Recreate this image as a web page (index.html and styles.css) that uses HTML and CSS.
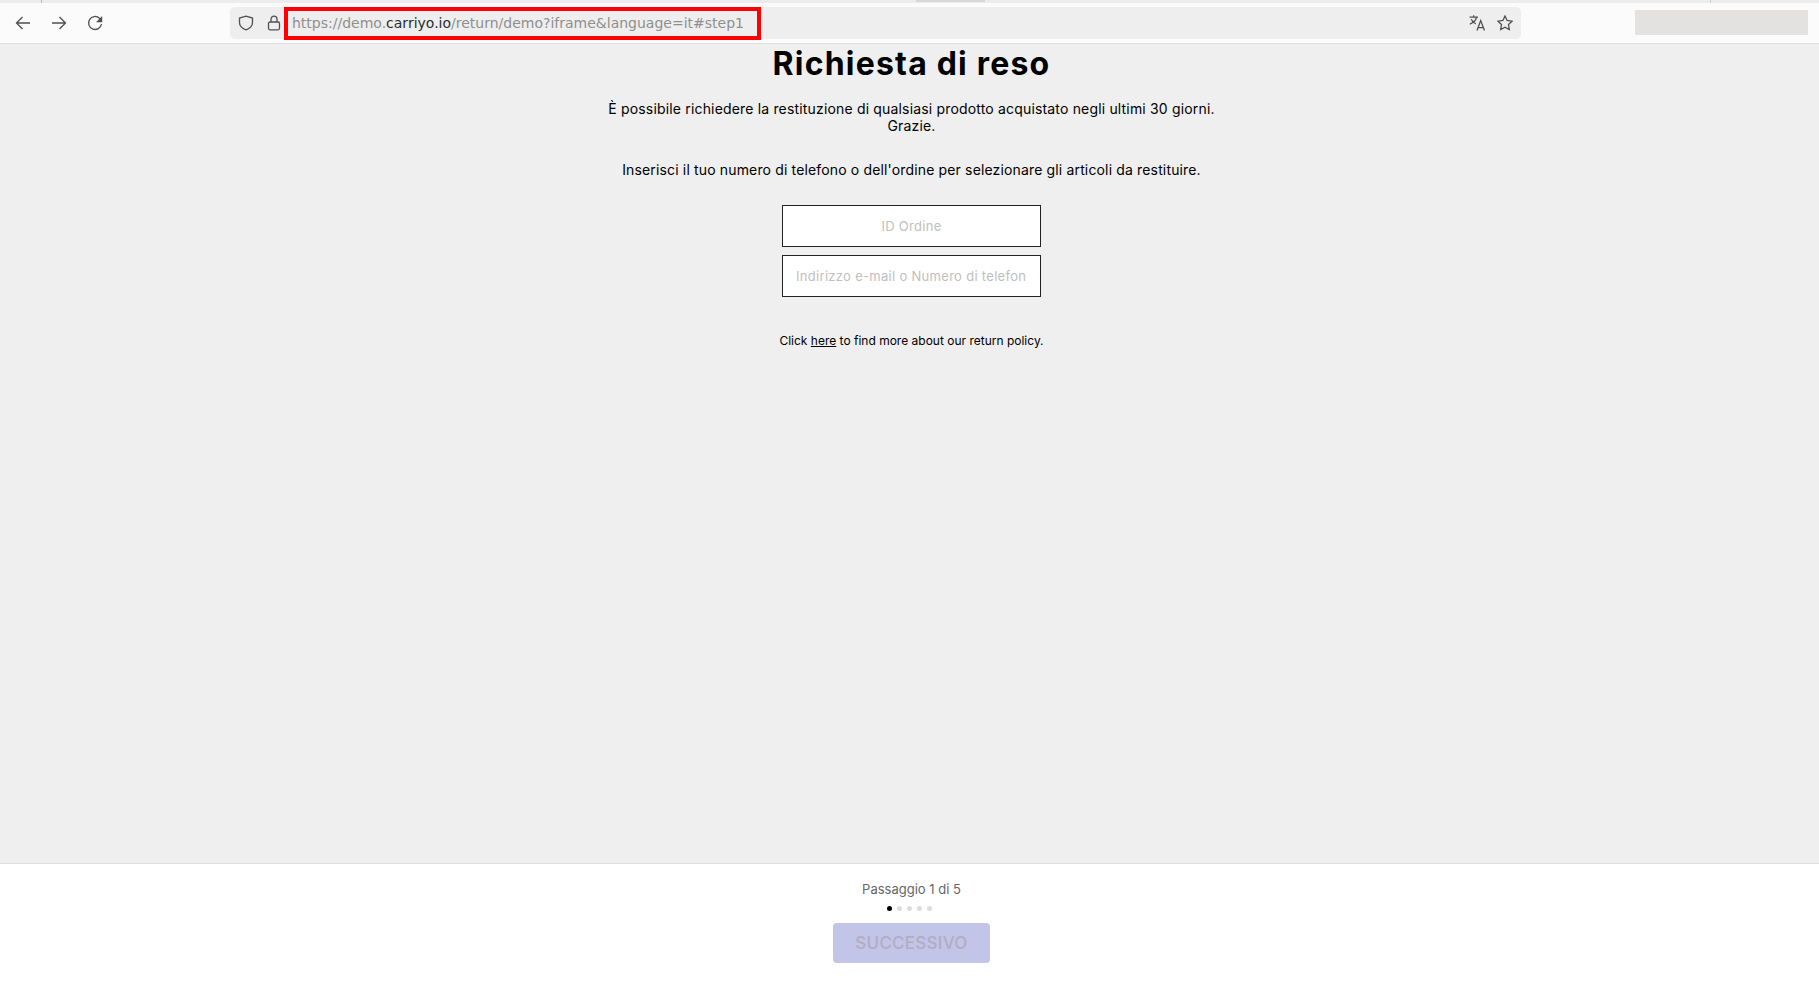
FILE: index.html
```html
<!DOCTYPE html>
<html lang="it">
<head>
<meta charset="utf-8">
<title>Richiesta di reso</title>
<link rel="stylesheet" href="styles.css">
</head>
<body>
<div class="tabstrip"><span class="tab-sep first"></span><span class="tab-hint"></span><span class="tab-sep last"></span></div>
<header class="toolbar">
  <div class="nav">
    <svg class="ico" viewBox="0 0 16 16"><path d="M15 8H1.500M7.500 2 1.500 8l6 6"/></svg>
    <svg class="ico" viewBox="0 0 16 16"><path d="M1 8h13.500M8.500 2l6 6-6 6"/></svg>
    <svg class="ico" viewBox="0 0 16 16"><path d="M14.500 9a6.500 6.500 0 1 1-2-5.800L14 4.600"/><path class="solid" d="M15.200 1v6.200H9z"/></svg>
  </div>
  <div class="urlbar">
    <svg class="ico shield" viewBox="0 0 16 16"><path d="M8 1.200 14.500 3v4.500c0 3.600-2.900 6-6.500 7.300-3.600-1.300-6.500-3.700-6.500-7.300V3z"/></svg>
    <svg class="ico lock" viewBox="0 0 16 16"><rect x="2.500" y="7" width="11" height="7.800" rx="1.500"/><path d="M5 7V4.200a3 3 0 0 1 6 0V7"/></svg>
    <div class="url"><span>https://demo.</span><b>carriyo.io</b><span>/return/demo?iframe&amp;language=it#step1</span></div>
    <div class="url-actions">
      <svg class="ico" viewBox="0 0 16 16"><path d="M.5 2.200h8.500M4.700 .2v2M7.600 2.200C7 5.200 4.300 7.800.8 9.200M2.200 4.200c1 2 2.500 3.600 4.600 4.600M8 15.500l3.700-10 3.800 10M9.200 12.700h5"/></svg>
      <svg class="ico" viewBox="0 0 16 16"><path d="m8 1 2.100 4.500 4.900.7-3.500 3.400.8 4.900L8 12.200l-4.300 2.300.8-4.900L1 6.200l4.900-.7z"/></svg>
    </div>
  </div>
  <div class="blank"></div>
</header>
<main class="content">
  <h1>Richiesta di reso</h1>
  <p class="intro">È possibile richiedere la restituzione di qualsiasi prodotto acquistato negli ultimi 30 giorni.<br>Grazie.</p>
  <p class="prompt">Inserisci il tuo numero di telefono o dell'ordine per selezionare gli articoli da restituire.</p>
  <form class="fields">
    <input type="text" placeholder="ID Ordine">
    <input type="text" placeholder="Indirizzo e-mail o Numero di telefono">
  </form>
  <p class="policy">Click <a href="#">here</a> to find more about our return policy.</p>
</main>
<footer class="footer">
  <div class="step">Passaggio 1 di 5</div>
  <div class="dots"><i class="on"></i><i></i><i></i><i></i><i></i></div>
  <button class="next" type="button" disabled>SUCCESSIVO</button>
</footer>
</body>
</html>
```
FILE: styles.css
```css
* { box-sizing: border-box; }
html, body { height: 100%; }
body { margin: 0; height: 994px; overflow: hidden; display: flex; flex-direction: column; background: #efefef; font-family: "Inter", "Liberation Sans", sans-serif; color: #000; }
.tabstrip { height: 3px; background: #ececec; display: flex; flex: none; }
.tab-sep { width: 1px; height: 3px; background: #bdbdbd; }
.tab-sep.first { margin-left: 41px; }
.tab-hint { width: 69px; height: 2px; margin-left: 874px; background: #d8d8d8; }
.tab-sep.last { margin-left: 725px; background: #cfcfcf; }
.toolbar { height: 41px; flex: none; background: #fbfbfb; border-bottom: 1px solid #dedede; display: flex; align-items: center; }
.nav { display: flex; gap: 20px; padding-left: 15px; width: 230px; }
.ico { width: 16px; height: 16px; fill: none; stroke: #505050; stroke-width: 1.300; flex: none; }
.ico .solid { fill: #505050; stroke: none; }
.urlbar { width: 1291px; height: 32px; background: #eeeeee; border-radius: 5px; display: flex; align-items: center; padding-left: 8px; }
.shield { margin-right: 12px; }
.lock { margin-right: 2px; }
.url { align-self: flex-start; height: 33px; width: 477px; border: 4px solid #f00; font: 14px/25px "DejaVu Sans", sans-serif; color: #8f8f8f; padding-left: 4px; white-space: nowrap; flex: none; }
.url b { font-weight: 400; color: #2b2b2b; }
.url-actions { margin-left: auto; display: flex; gap: 12px; padding-right: 8px; }
.blank { width: 173px; height: 25px; margin: 0 0 1px 114px; background: #e3e2e0; }
.content { flex: 1; display: flex; flex-direction: column; align-items: center; padding-left: 4px; }
h1 { margin: 1px 0 0; font-size: 32px; line-height: 38px; font-weight: 700; letter-spacing: 1.200px; }
.intro, .prompt { margin: 0; text-align: center; font-size: 14px; line-height: 17px; letter-spacing: .17px; }
.intro { margin-top: 17px; }
.prompt { margin-top: 27px; letter-spacing: .15px; }
.fields { display: flex; flex-direction: column; gap: 8px; margin-top: 27px; width: 259px; }
.fields input { width: 259px; height: 42px; background: #fff; border: 1px solid #222; border-radius: 0; padding: 0 13px; text-align: center; font: 13px "Inter", sans-serif; letter-spacing: .3px; outline: none; }
.fields input + input { text-align: left; }
.fields input::placeholder { color: #c0c0c0; opacity: 1; }
.policy { margin: 36px 0 0; font-size: 12px; line-height: 16px; }
.policy a { color: #000; }
.footer { height: 131px; flex: none; background: #fff; border-top: 1px solid #dedede; display: flex; flex-direction: column; align-items: center; padding: 17px 0 0 4px; }
.step { font-size: 13px; line-height: 17px; color: #666; }
.dots { display: flex; gap: 5px; margin: 8px 5px 0 0; }
.dots i { width: 5px; height: 5px; border-radius: 50%; background: #dcdcdc; }
.dots i.on { background: #000; }
.next { width: 157px; height: 40px; margin-top: 12px; border: 0; border-radius: 4px; background: #c2c4e8; color: #aeaec4; font: 500 17px "Inter", sans-serif; letter-spacing: .25px; }
```
